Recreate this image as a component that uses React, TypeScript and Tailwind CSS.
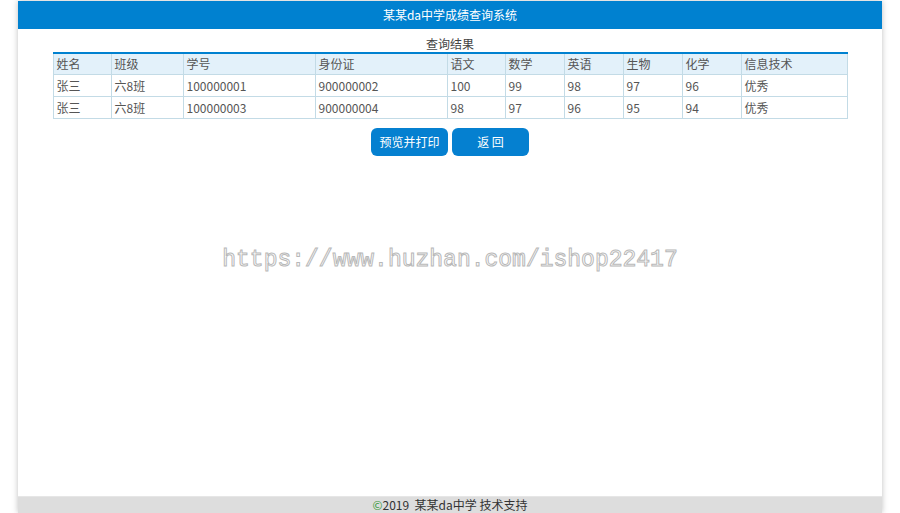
import React from "react";

const cols = [
  { h: "姓名", w: 58 },
  { h: "班级", w: 72 },
  { h: "学号", w: 132 },
  { h: "身份证", w: 132 },
  { h: "语文", w: 58 },
  { h: "数学", w: 59 },
  { h: "英语", w: 59 },
  { h: "生物", w: 59 },
  { h: "化学", w: 59 },
  { h: "信息技术", w: 106 },
];

const rows = [
  ["张三", "六8班", "100000001", "900000002", "100", "99", "98", "97", "96", "优秀"],
  ["张三", "六8班", "100000003", "900000004", "98", "97", "96", "95", "94", "优秀"],
];

export default function App() {
  return (
    <div
      className="w-[900px] h-[513px] bg-white overflow-hidden relative"
      style={{ fontFamily: '"Noto Sans CJK SC", "Noto Sans", sans-serif' }}
    >
      <div className="mx-[18px] mt-px h-[512px] flex flex-col shadow-[0_0_6px_rgba(0,0,0,0.25)]">
        <div className="h-[28px] bg-[#0081d0] flex items-center justify-center text-white text-[12px]">
          某某da中学成绩查询系统
        </div>
        <div className="flex-1 bg-white border-b border-[#e6e6e6] flex flex-col items-center">
          <div className="mt-[7px] text-[12px] leading-[16px] text-[#444]">查询结果</div>
          <table className="w-[794px] border-collapse table-fixed text-[12px] text-[#555] border-t-2 border-t-[#0081d0]">
            <colgroup>
              {cols.map((c, i) => (
                <col key={i} style={{ width: c.w }} />
              ))}
            </colgroup>
            <thead>
              <tr className="bg-[#e3f1fa] h-[21px]">
                {cols.map((c, i) => (
                  <th key={i} className="border border-[#c3dbe6] border-t-0 text-left font-normal pl-[3px] leading-[20px]">
                    {c.h}
                  </th>
                ))}
              </tr>
            </thead>
            <tbody>
              {rows.map((r, ri) => (
                <tr key={ri} className="h-[22px]">
                  {r.map((v, ci) => (
                    <td key={ci} className="border border-[#c3dbe6] pl-[3px] leading-[21px]">
                      {v}
                    </td>
                  ))}
                </tr>
              ))}
            </tbody>
          </table>
          <div className="mt-[9px] flex gap-[4px]">
            <button className="w-[77px] h-[28px] rounded-[6px] bg-[#0580d0] text-white text-[12px]">
              预览并打印
            </button>
            <button className="w-[77px] h-[28px] rounded-[6px] bg-[#0580d0] text-white text-[12px]">
              返&nbsp;回
            </button>
          </div>
          <div
            className="mt-[89px] text-[23px] leading-[30px] text-transparent"
            style={{
              fontFamily: '"Liberation Mono", "DejaVu Sans Mono", monospace',
              WebkitTextStroke: "1px #b8b8b8",
            }}
          >
            https://www.huzhan.com/ishop22417
          </div>
        </div>
        <div className="h-[16px] bg-[#dddddd] flex items-center justify-center text-[12px] text-[#333]">
          <span className="text-[#3a9a3a]">©</span>
          <span>2019&nbsp;&nbsp;某某da中学 技术支持</span>
        </div>
      </div>
    </div>
  );
}
